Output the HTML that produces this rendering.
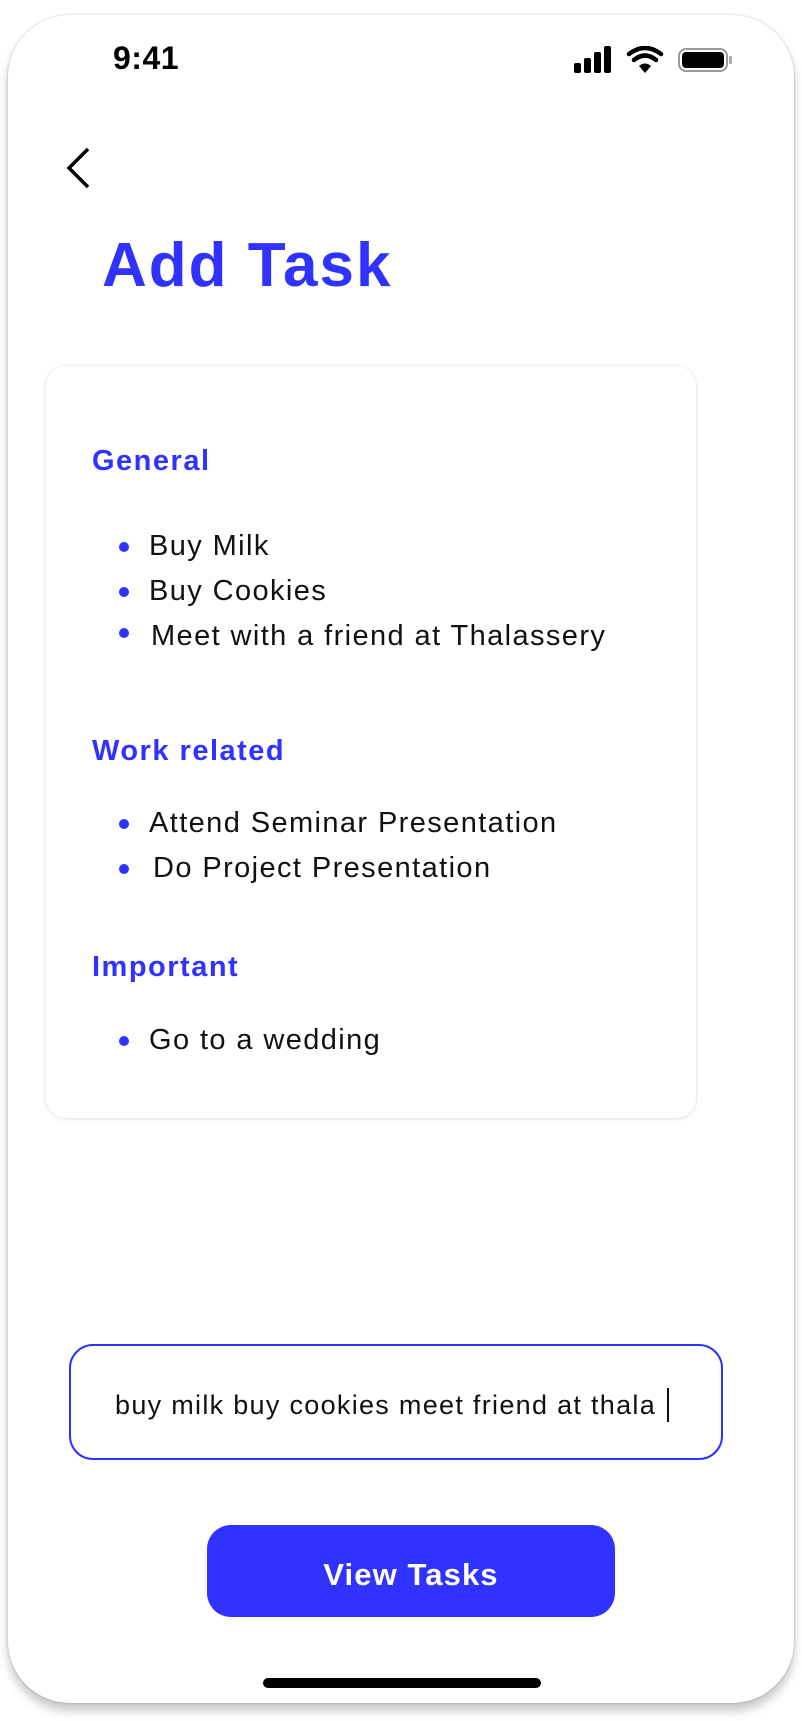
<!DOCTYPE html>
<html><head><meta charset="utf-8"><style>
html,body{margin:0;padding:0;background:#fff;width:802px;height:1721px;overflow:hidden;font-family:"Liberation Sans",sans-serif;}
.frame{position:absolute;left:8px;top:15px;width:786px;height:1688px;border-radius:62px;background:#fff;box-shadow:0 0 2px rgba(0,0,0,.25),0 8px 10px rgba(0,0,0,.22);}
.abs{position:absolute;}
.time{left:113px;top:40px;font-size:32px;font-weight:bold;color:#000;letter-spacing:0.5px;}
.title{left:102px;top:230px;font-size:62px;font-weight:bold;color:#3033ff;letter-spacing:2px;}
.card{left:46px;top:366px;width:650px;height:752px;border-radius:20px;background:#fff;box-shadow:0 0 3px rgba(0,0,0,.12),0 2px 6px rgba(0,0,0,.05);}
.h{position:absolute;left:92px;font-size:29px;font-weight:bold;color:#3033ff;letter-spacing:1.5px;}
.it{position:absolute;left:149px;font-size:29px;color:#111;letter-spacing:1.4px;}
.dot{position:absolute;left:119px;width:10px;height:10px;border-radius:50%;background:#3033ff;}
.input{left:69px;top:1344px;width:650px;height:112px;border:2px solid #3033ff;border-radius:24px;}
.btn{left:207px;top:1529px;width:408px;height:92px;border-radius:24px;background:#3033ff;color:#fff;font-size:31px;font-weight:bold;text-align:center;line-height:92px;letter-spacing:1.1px;}
.btnbg{left:207px;top:1525px;width:408px;height:92px;border-radius:24px;background:#3033ff;}
.home{left:263px;top:1678px;width:278px;height:10px;border-radius:5px;background:#000;}
</style></head><body>
<div class="frame"></div>
<div class="abs time">9:41</div>
<svg class="abs" style="left:572px;top:46px" width="160" height="28" viewBox="0 0 160 28">
<rect x="2" y="17" width="7" height="10" rx="2" fill="#000"/>
<rect x="12" y="12" width="7" height="15" rx="2" fill="#000"/>
<rect x="22" y="6" width="7" height="21" rx="2" fill="#000"/>
<rect x="32" y="0" width="7" height="27" rx="2" fill="#000"/>
<path d="M57 8 Q73 -4 89 8" stroke="#000" stroke-width="4.5" fill="none" stroke-linecap="round"/>
<path d="M62 14 Q73 5 84 14" stroke="#000" stroke-width="4.5" fill="none" stroke-linecap="round"/>
<path d="M67 20 L73 27 L79 20 Q73 15 67 20Z" fill="#000"/>
<rect x="107" y="3" width="48" height="22" rx="7" fill="none" stroke="#999" stroke-width="2"/>
<rect x="110" y="6" width="42" height="16" rx="4" fill="#000"/>
<rect x="157" y="10" width="3" height="8" rx="1.5" fill="#aaa"/>
</svg>
<svg class="abs" style="left:62px;top:146px" width="32" height="44" viewBox="0 0 32 44"><path d="M26 3 L7 22 L26 41" stroke="#000" stroke-width="3.5" fill="none"/></svg>
<div class="abs title">Add Task</div>
<div class="abs card"></div>
<div class="h" style="top:445px">General</div>
<div class="dot" style="top:542px"></div><div class="it" style="top:530px">Buy Milk</div>
<div class="dot" style="top:587px"></div><div class="it" style="top:575px">Buy Cookies</div>
<div class="dot" style="top:628px"></div><div class="it" style="top:620px;left:151px">Meet with a friend at Thalassery</div>
<div class="h" style="top:735px">Work related</div>
<div class="dot" style="top:819px"></div><div class="it" style="top:807px">Attend Seminar Presentation</div>
<div class="dot" style="top:864px"></div><div class="it" style="top:852px;left:153px">Do Project Presentation</div>
<div class="h" style="top:951px">Important</div>
<div class="dot" style="top:1036px"></div><div class="it" style="top:1024px">Go to a wedding</div>
<div class="abs input"></div>
<div class="abs" style="left:115px;top:1390px;font-size:27px;color:#111;letter-spacing:1.3px;white-space:nowrap;">buy milk buy cookies meet friend at thala</div>
<div class="abs" style="left:667px;top:1388px;width:2px;height:34px;background:#111;"></div>
<div class="abs btnbg"></div>
<div class="abs" style="left:207px;top:1529px;width:408px;height:92px;color:#fff;font-size:31px;font-weight:bold;text-align:center;line-height:92px;letter-spacing:1.1px;">View Tasks</div>
<div class="abs home"></div>
</body></html>
